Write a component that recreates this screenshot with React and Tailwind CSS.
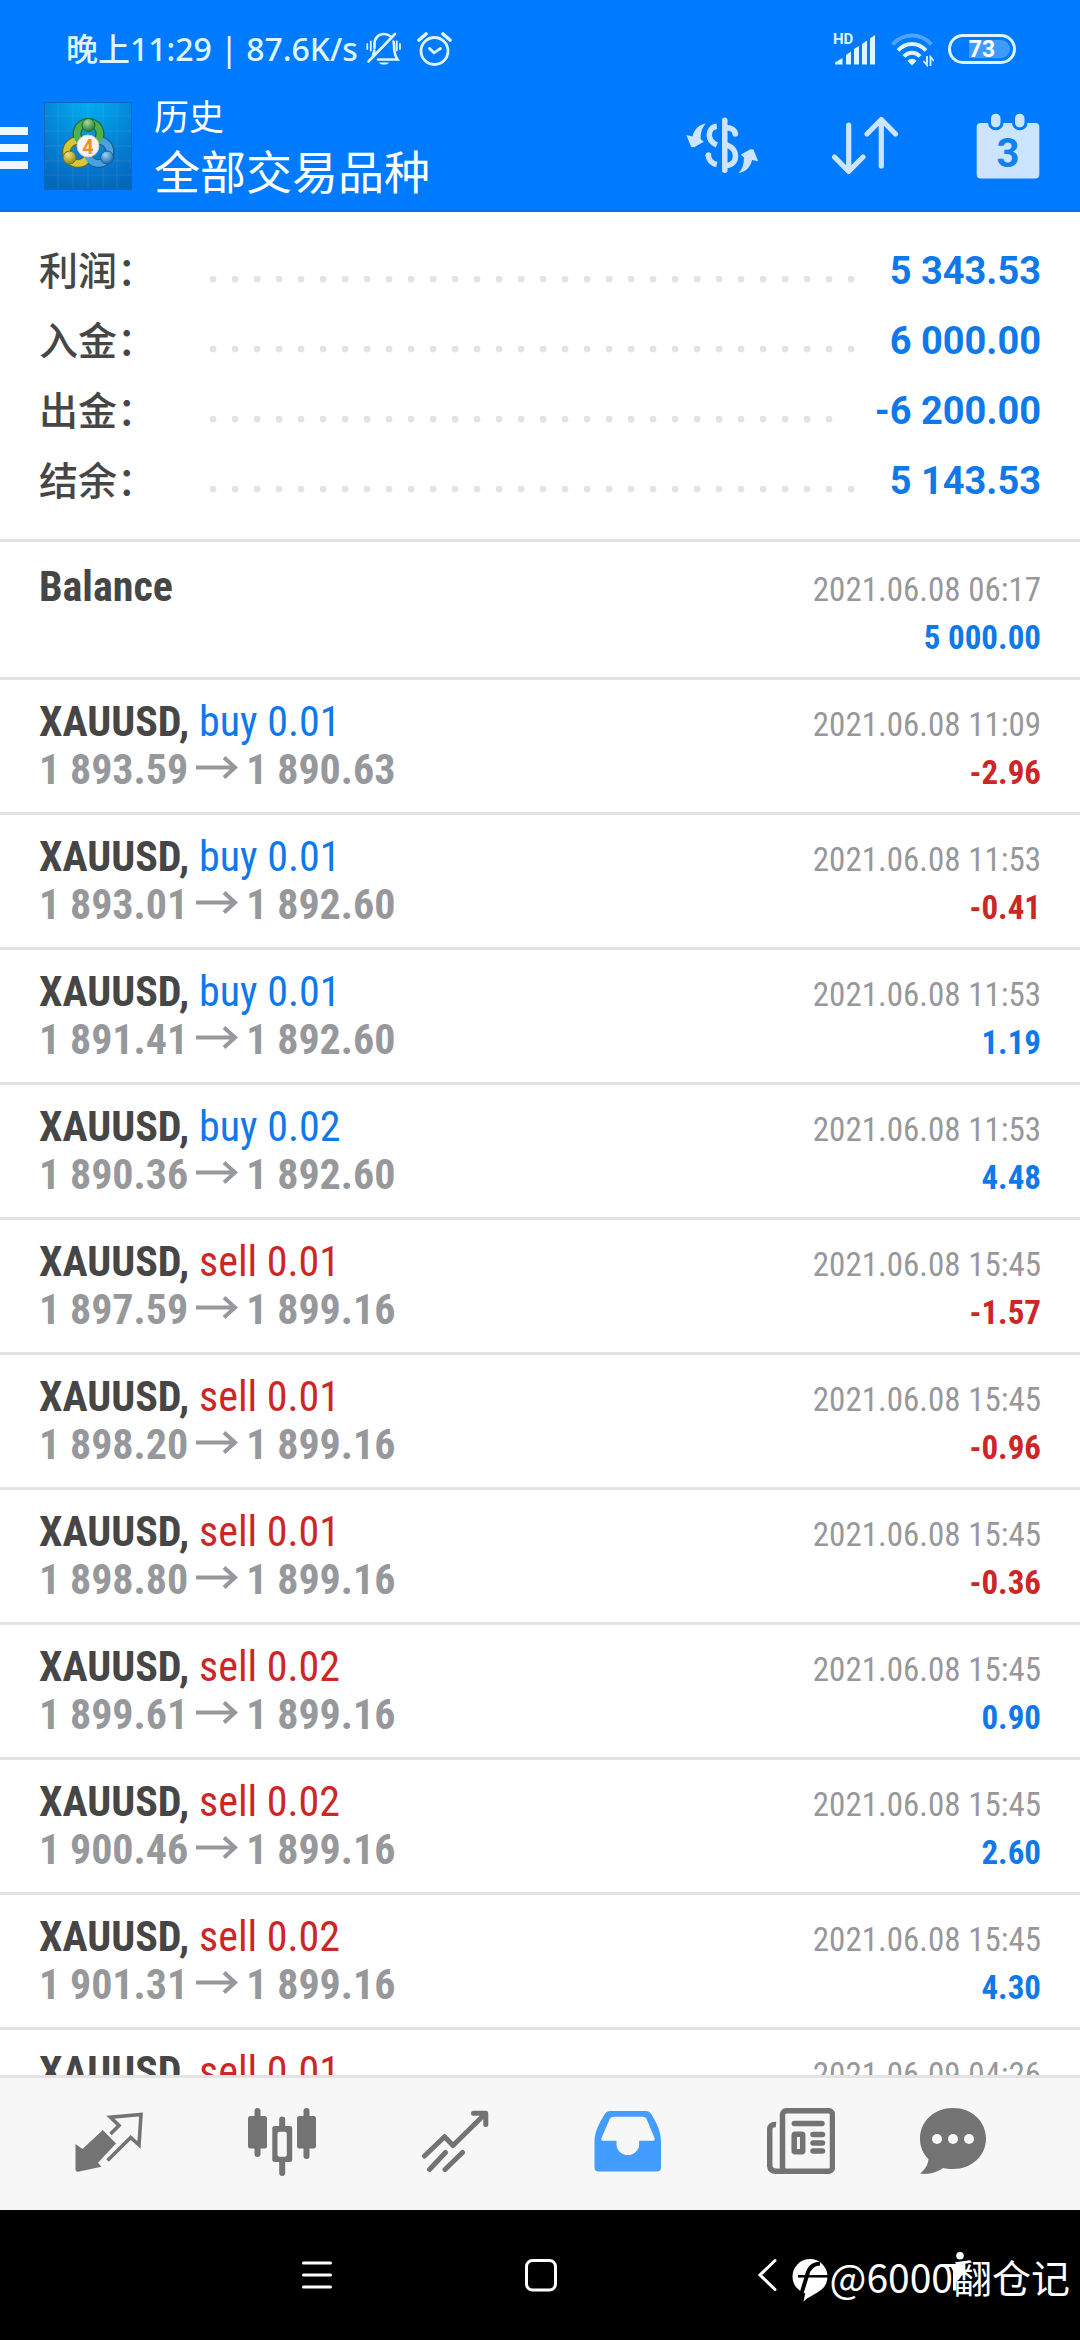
import React from 'react';

const summary = [
    { label: '利润', value: '5 343.53' },
    { label: '入金', value: '6 000.00' },
    { label: '出金', value: '-6 200.00' },
    { label: '结余', value: '5 143.53' },
];

const deals = [
    { type: 'buy', volume: '0.01', open: '1 893.59', close: '1 890.63', time: '2021.06.08 11:09', profit: '-2.96' },
    { type: 'buy', volume: '0.01', open: '1 893.01', close: '1 892.60', time: '2021.06.08 11:53', profit: '-0.41' },
    { type: 'buy', volume: '0.01', open: '1 891.41', close: '1 892.60', time: '2021.06.08 11:53', profit: '1.19' },
    { type: 'buy', volume: '0.02', open: '1 890.36', close: '1 892.60', time: '2021.06.08 11:53', profit: '4.48' },
    { type: 'sell', volume: '0.01', open: '1 897.59', close: '1 899.16', time: '2021.06.08 15:45', profit: '-1.57' },
    { type: 'sell', volume: '0.01', open: '1 898.20', close: '1 899.16', time: '2021.06.08 15:45', profit: '-0.96' },
    { type: 'sell', volume: '0.01', open: '1 898.80', close: '1 899.16', time: '2021.06.08 15:45', profit: '-0.36' },
    { type: 'sell', volume: '0.02', open: '1 899.61', close: '1 899.16', time: '2021.06.08 15:45', profit: '0.90' },
    { type: 'sell', volume: '0.02', open: '1 900.46', close: '1 899.16', time: '2021.06.08 15:45', profit: '2.60' },
    { type: 'sell', volume: '0.02', open: '1 901.31', close: '1 899.16', time: '2021.06.08 15:45', profit: '4.30' },
    { type: 'sell', volume: '0.01', open: '1 899.52', close: '1 893.20', time: '2021.06.09 04:26', profit: '6.32' },
];

function StatusBar() {
    return (
        <div className="flex h-[98px] items-center justify-between pl-[66px] pr-16 text-[#dcf5ff]">
            <div className="flex items-center">
                <span className="mr-2 font-['Noto_Sans','Noto_Sans_CJK_SC',sans-serif] text-[32px] font-medium whitespace-nowrap">
                    晚上11:29 | 87.6K/s
                </span>
                <svg className="mr-4 h-[34px] w-[35px]" viewBox="0 0 35 34" fill="none" stroke="currentColor" strokeWidth="2.6" strokeLinecap="round">
                    <path d="M8.5 16V12C8.5 6 12.5 2 18 2c2.5 0 4.8.8 6.5 2.3M27.5 9.5c.4 1.2.5 2 .5 3.5 0 7 .6 10.5 3.5 14.5H12M8.3 18.5c-.2 2-.6 3.3-1.3 4.5M2.5 29.5L29 2" />
                    <path d="M1.3 12v5M4.8 9.5v9M30.8 9.5v9M34 12v5" strokeWidth="1.8" />
                    <path d="M13 30.5h10c-1.5 3-8.5 3-10 0z" fill="currentColor" stroke="none" />
                </svg>
                <svg className="h-[34px] w-[35px]" viewBox="0 0 35 34" fill="none" stroke="currentColor" strokeWidth="2.8" strokeLinecap="round">
                    <circle cx="17.5" cy="19" r="13.5" />
                    <path d="M2 8L9 2M33 8L26 2" strokeWidth="3.6" />
                    <path d="M12.5 16.5l4.5 4.3 6.5-4.3" />
                </svg>
            </div>
            <div className="flex items-center gap-[14px]">
                <svg className="h-9 w-[43px]" viewBox="0 0 43 36" fill="currentColor">
                    <text x="0" y="13" className="font-['Roboto',sans-serif] text-[15px] font-bold">HD</text>
                    <path d="M2 33.5V31.5L9.5 27V33.5zM13 33.5V24L18 20.5V33.5zM21 33.5V18L26 15V33.5zM29 33.5V13L34 9.5V33.5zM37 33.5V7.5L42 4V33.5z" />
                </svg>
                <svg className="h-[35px] w-11" viewBox="0 0 44 35" fill="none" stroke="currentColor" strokeWidth="4">
                    <path d="M2.5 12.5C13.5.5 30.5.5 41.5 12.5" opacity=".35" />
                    <path d="M8 18.5C16 9.8 28 9.8 36 18.5" />
                    <path d="M14 24.5C18.5 19.5 25.5 19.5 30 24.5" />
                    <path d="M22 33.5l-4.5-4.5c2.5-3 6.5-3 9 0z" fill="currentColor" stroke="none" />
                    <path d="M37 24v9l-3.5-4M40.5 34v-9l3.5 4" strokeWidth="1.8" />
                </svg>
                <div className="relative flex h-[30px] w-[68px] items-center justify-center rounded-full border-[3px] border-[#dcf5ff]">
                    <div className="absolute inset-y-[3px] left-[18px] right-[3px] rounded-r-full bg-white/25" />
                    <span className="relative font-['Roboto',sans-serif] text-[23px] font-bold leading-none text-white">73</span>
                </div>
            </div>
        </div>
    );
}

function AppLogo() {
    return (
        <svg className="size-[88px]" viewBox="0 0 88 88">
            <defs>
                <radialGradient id="tile" cx=".5" cy="0" r="1">
                    <stop offset="0" stopColor="#00aef0" />
                    <stop offset=".55" stopColor="#0583d6" />
                    <stop offset="1" stopColor="#0468bd" />
                </radialGradient>
                <radialGradient id="green" cx=".4" cy=".3" r=".7">
                    <stop offset="0" stopColor="#a5dc9a" />
                    <stop offset="1" stopColor="#1f7f35" />
                </radialGradient>
                <radialGradient id="gold" cx=".4" cy=".3" r=".7">
                    <stop offset="0" stopColor="#f0e382" />
                    <stop offset="1" stopColor="#988a14" />
                </radialGradient>
                <radialGradient id="blue" cx=".4" cy=".3" r=".7">
                    <stop offset="0" stopColor="#9fd4f5" />
                    <stop offset="1" stopColor="#1767b0" />
                </radialGradient>
            </defs>
            <rect width="88" height="88" fill="url(#tile)" />
            <path d="M29 0v88M44 0v88M59 0v88M73 0v88M14 0v88M0 14h88M0 29h88M0 44h88M0 59h88M0 73h88" stroke="#fff" strokeOpacity=".08" />
            <rect x=".5" y=".5" width="87" height="87" fill="none" stroke="#0a67bd" />
            <g fill="none" strokeWidth="9">
                <circle cx="34" cy="50" r="11.5" stroke="#6f6a18" />
                <circle cx="54.500" cy="50" r="11.5" stroke="#1a5c96" />
                <circle cx="44.5" cy="32" r="11.5" stroke="#22692c" />
            </g>
            <g fill="none" strokeWidth="6.5">
                <circle cx="34" cy="50" r="11.5" stroke="#d3c838" />
                <circle cx="54.500" cy="50" r="11.5" stroke="#4aa3df" />
                <circle cx="44.5" cy="32" r="11.5" stroke="#4fb050" />
            </g>
            <circle cx="44.5" cy="23" r="6.5" fill="url(#green)" stroke="#1f6b2c" />
            <circle cx="25.5" cy="55.5" r="6.5" fill="url(#gold)" stroke="#7d7216" />
            <circle cx="63" cy="55.5" r="6.5" fill="url(#blue)" stroke="#175a96" />
            <circle cx="44" cy="44" r="11" fill="#f6f3f1" stroke="#c9c9c4" />
            <text x="44" y="51.5" textAnchor="middle" fill="#f28c28" className="font-['Roboto',sans-serif] text-[20px] font-bold">4</text>
        </svg>
    );
}

function Toolbar() {
    return (
        <div className="flex h-24 items-center pr-10">
            <button type="button" aria-label="菜单" className="mr-4 flex w-7 flex-col gap-[9px] pt-1">
                <span className="h-2 bg-[#eef9ff]" />
                <span className="h-2 bg-[#eef9ff]" />
                <span className="h-2 bg-[#eef9ff]" />
            </button>
            <AppLogo />
            <div className="ml-[22px] flex-1 pb-2 text-white">
                <p className="text-[35px] leading-[54px]">历史</p>
                <h1 className="text-[46px] leading-[54px]">全部交易品种</h1>
            </div>
            <div className="flex items-center gap-[74px] text-[#cce4ff]">
                <button type="button" aria-label="货币">
                    <svg className="h-[60px] w-[72px]" viewBox="0 0 72 60" fill="none" stroke="currentColor" strokeWidth="5.5">
                        <path d="M38.8 4.3v50" strokeLinecap="round" />
                        <path d="M30.8 10.3C25.5 11 23.3 15 23.3 19s2.7 8 7.5 10M22 38.5c.6 5.5 4 9 8.8 10M40 11.5c5.5.3 8.8 2.5 9.5 6.5M40 28.5c6.5 2.5 9.5 6 9.5 11.5S46 49.3 40 49.5" />
                        <circle cx="49.3" cy="18" r="2.8" fill="currentColor" stroke="none" />
                        <circle cx="22.5" cy="39" r="2.8" fill="currentColor" stroke="none" />
                        <g fill="currentColor" stroke="none">
                            <path d="M20 7.500C13 8.500 8.500 13 6.500 20.500L.3 19 5.200 31l3 .2 9.500-5.400-3-2.800C14.500 17 16 11.500 20 7.500z" />
                            <path d="M20 7.500C13 8.500 8.500 13 6.500 20.500L.3 19 5.200 31l3 .2 9.500-5.400-3-2.800C14.500 17 16 11.500 20 7.500z" transform="rotate(180 36.3 32.2)" />
                        </g>
                    </svg>
                </button>
                <button type="button" aria-label="排序">
                    <svg className="h-[62px] w-[70px]" viewBox="0 0 70 62" fill="none" stroke="currentColor" strokeWidth="5.2" strokeLinecap="round" strokeLinejoin="round">
                        <path d="M16.7 10v46M2.5 42l14.2 14.5L31 42M49.3 51V5M35 19L49.3 4.5 63.5 19" />
                    </svg>
                </button>
                <button type="button" aria-label="日期">
                    <svg className="h-[66px] w-16" viewBox="0 0 64 66" fill="currentColor">
                        <rect x=".7" y="10" width="62.6" height="55.5" rx="4" />
                        <g stroke="#007aff" strokeWidth="6" paintOrder="stroke">
                            <rect x="15" y=".7" width="9.5" height="13.5" rx="4.5" />
                            <rect x="39" y=".7" width="9.5" height="13.5" rx="4.5" />
                        </g>
                        <text x="32" y="54" textAnchor="middle" fill="#1380f0" className="font-['Roboto',sans-serif] text-[40px] font-bold">3</text>
                    </svg>
                </button>
            </div>
        </div>
    );
}

function Summary() {
    return (
        <dl className="border-b-[3px] border-[#e3e3e3] px-[39px] pt-6 pb-[23px]">
            {summary.map((row) => (
                <div key={row.label} className="flex h-[70px] items-center">
                    <dt className="w-[171px] pb-[5px] text-[39px] font-medium text-[#464646]">{row.label}：</dt>
                    <div className="mt-4 mr-[28px] h-[7px] flex-1 bg-[radial-gradient(circle_at_3px_3px,#e3e3e3_3px,transparent_4px)] bg-[length:22px_7px] bg-repeat-x" />
                    <dd className="font-['Roboto',sans-serif] text-[38px] font-bold text-[#0f79ea]">{row.value}</dd>
                </div>
            ))}
        </dl>
    );
}

function PriceArrow() {
    return (
        <svg className="mx-2 inline h-7 w-[42px] align-baseline" viewBox="0 0 42 28" fill="none" stroke="currentColor" strokeWidth="4">
            <path d="M0 11.5h39M28 1.5l11 10-11 10" />
        </svg>
    );
}

function DealRow({ deal }) {
    const profitColor = deal.profit.startsWith('-') ? 'text-[#cc2626]' : 'text-[#0f79ea]';

    return (
        <li className="border-b-[3px] border-[#e3e3e3] px-[39px] py-[18px]">
            <div className="flex h-12 items-baseline justify-between text-[42px] leading-[48px]">
                <span className="font-bold text-[#464646]">
                    XAUUSD,{' '}
                    <span className={deal.type === 'buy' ? 'font-normal text-[#0f79ea]' : 'font-normal text-[#cc2626]'}>
                        {deal.type} {deal.volume}
                    </span>
                </span>
                <time className="text-[33px] text-[#97989b]">{deal.time}</time>
            </div>
            <div className="flex h-12 items-baseline justify-between text-[42px] leading-[48px] font-bold">
                <span className="text-[#97989b]">
                    {deal.open}
                    <PriceArrow />
                    {deal.close}
                </span>
                <span className={`text-[33px] ${profitColor}`}>{deal.profit}</span>
            </div>
        </li>
    );
}

function HistoryList() {
    return (
        <ul className="min-h-0 flex-1 overflow-hidden font-['Roboto_Condensed',sans-serif]">
            <li className="border-b-[3px] border-[#e3e3e3] px-[39px] pt-[21px] pb-[18px]">
                <div className="flex h-12 items-baseline justify-between text-[42px] leading-[48px]">
                    <span className="font-bold text-[#464646]">Balance</span>
                    <time className="text-[33px] text-[#97989b]">2021.06.08 06:17</time>
                </div>
                <div className="h-12 text-right text-[42px] leading-[48px]">
                    <span className="text-[33px] font-bold text-[#0f79ea]">5 000.00</span>
                </div>
            </li>
            {deals.map((deal, i) => (
                <DealRow key={i} deal={deal} />
            ))}
        </ul>
    );
}

function TabBar() {
    return (
        <nav className="flex items-center border-t-[3px] border-[#e3e3e3] bg-[#f7f7f7] pt-[30px] pr-[61px] pb-[34px] pl-[22px] text-[#737373]">
            <button type="button" aria-label="行情" className="flex flex-1 justify-center">
                <svg className="size-[68px]" viewBox="0 0 68 68" fill="none" stroke="currentColor" strokeWidth="3.6">
                    <path d="M.5 36l7 5L27.8 22 41 35.5 23 54.7l3.5 4L3 63.7Q.5 64 .5 61z" fill="currentColor" stroke="none" />
                    <path d="M35.5 26l8.5-8.5L35.5 9.3 66 6.5l-2 30.5-8.3-7.5L32.5 52.5" />
                </svg>
            </button>
            <button type="button" aria-label="图表" className="flex flex-1 justify-center">
                <svg className="size-[68px]" viewBox="0 0 68 68" fill="currentColor">
                    <rect x="0" y="8" width="19" height="32.5" rx="2.5" />
                    <rect x="6.5" y="0" width="6" height="49" rx="3" />
                    <path fillRule="evenodd" d="M26.5 18H42q2.2 0 2.2 2.2V51.8Q44.2 54 42 54H26.5q-2.2 0-2.2-2.2V20.2Q24.3 18 26.5 18zM31.5 23.7q-2 0-2 2v21q0 2 2 2h5.3q2 0 2-2v-21q0-2-2-2z" />
                    <path d="M31.2 19v-7.5a3 3 0 0 1 6 0V19zM31.2 53v12a3 3 0 0 0 6 0V53z" />
                    <rect x="49" y="8" width="19" height="32.5" rx="2.5" />
                    <rect x="55.5" y="0" width="6" height="51" rx="3" />
                </svg>
            </button>
            <button type="button" aria-label="交易" className="flex flex-1 justify-center">
                <svg className="size-[68px]" viewBox="0 0 68 68" fill="none" stroke="currentColor" strokeWidth="5" strokeLinecap="round" strokeLinejoin="round">
                    <path d="M3.5 48l20-19.3L32 37.5 64 6M52.5 5.2h12.3V16.5M8.5 61.5l16-17M24 61.5l17.5-17" />
                </svg>
            </button>
            <button type="button" aria-label="历史" aria-current="page" className="flex flex-1 justify-center text-[#439dff]">
                <svg className="size-[68px]" viewBox="0 0 68 68" fill="currentColor" fillRule="evenodd">
                    <path d="M16 3H52q3.5 0 5.5 3.5C63.5 16.5 67 24 67 34v25.5q0 4-4 4H4.5q-4 0-4-4V34C.5 24 4.5 16.5 10.5 6.5Q12.5 3 16 3zM20 8.7q-3.5 0-4.5 2.8L7.5 30q-.8 2.7 1.5 2.7h13.5V36.5a11.3 10.5 0 0 0 22.6 0V32.7H59q2.3 0 1.5-2.7L52.8 11.5q-1-2.8-4.5-2.8z" />
                </svg>
            </button>
            <button type="button" aria-label="新闻" className="flex flex-1 justify-center">
                <svg className="size-[68px]" viewBox="0 0 68 68" fill="none" stroke="currentColor" strokeWidth="5.5">
                    <rect x="15.5" y="2.7" width="50" height="60.5" rx="4" />
                    <path d="M9 16.5Q2.7 16 2.7 22V57q0 6.2 6.3 6.2h9" />
                    <path d="M27.3 15.5H55M46 26.5h9.5M46 35h9.5M46 43h9.5" strokeLinecap="round" />
                    <rect x="27.2" y="26.2" width="8.5" height="17.5" rx="1" />
                </svg>
            </button>
            <button type="button" aria-label="消息" className="flex w-[132px] justify-center">
                <svg className="size-[68px]" viewBox="0 0 68 68">
                    <path fill="currentColor" d="M34 0C15.5 0 1 13 1 30.5 1 39 4 45.5 9.5 51 9 57 6 61.5 1 65.5 10 67 18.5 64 24 60c3 .7 6.5 1 10 1 18.5 0 33-13 33-30.5S52.5 0 34 0z" />
                    <g fill="#f7f7f7">
                        <circle cx="18" cy="31" r="5" />
                        <circle cx="34" cy="31" r="5" />
                        <circle cx="50" cy="31" r="5" />
                    </g>
                </svg>
            </button>
        </nav>
    );
}

function SystemNav() {
    return (
        <div className="relative flex h-[130px] items-center bg-black pr-12 pl-[203px] text-white">
            <button type="button" aria-label="最近任务" className="flex flex-1 justify-center">
                <svg className="h-[34px] w-8" viewBox="0 0 32 34" fill="none" stroke="currentColor" strokeWidth="3" strokeLinecap="round">
                    <path d="M3.5 5h27M3.5 17h27M3.5 29h27" />
                </svg>
            </button>
            <button type="button" aria-label="主页" className="flex flex-1 justify-center">
                <svg className="h-[34px] w-8" viewBox="0 0 32 34" fill="none" stroke="currentColor" strokeWidth="3">
                    <rect x="1.5" y="2.5" width="29" height="29.5" rx="6" />
                </svg>
            </button>
            <button type="button" aria-label="返回" className="flex flex-1 justify-center">
                <svg className="h-[34px] w-8" viewBox="0 0 32 34" fill="none" stroke="currentColor" strokeWidth="3" strokeLinecap="round">
                    <path d="M25 2.5L10 17l15 14.5" />
                </svg>
            </button>
            <button type="button" aria-label="无障碍" className="flex w-[154px] justify-center">
                <svg className="h-[50px] w-8" viewBox="0 0 32 50" fill="currentColor">
                    <circle cx="21" cy="5.700" r="3.800" />
                    <path d="M4 14h14l5-1.500 2 6-5 11-3 2v9h-3V21L12 17H4z" />
                </svg>
            </button>
            <div className="absolute right-[10px] bottom-9 flex items-center gap-[2px]">
                <svg className="mt-2 h-[43px] w-9" viewBox="0 0 36 43">
                    <circle cx="18" cy="17.5" r="17.5" fill="#fff" />
                    <path d="M15.500 24L11.500 42.500C16 38 21 36.500 26 33z" fill="#fff" />
                    <path d="M28 4.5C20 5 16.500 9 15 16.500L9 36" fill="none" stroke="#000" strokeWidth="4" />
                    <path d="M6 17.300h30" stroke="#000" strokeWidth="2.500" />
                </svg>
                <span className="text-[39px] leading-[56px] whitespace-nowrap">@6000翻仓记</span>
            </div>
        </div>
    );
}

export default function App() {
    return (
        <div className="flex h-screen flex-col bg-white font-['Noto_Sans_CJK_SC',sans-serif]">
            <header className="border-b-2 border-[#0b6fdd] bg-[#007aff] pb-4">
                <StatusBar />
                <Toolbar />
            </header>
            <Summary />
            <HistoryList />
            <TabBar />
            <SystemNav />
        </div>
    );
}
